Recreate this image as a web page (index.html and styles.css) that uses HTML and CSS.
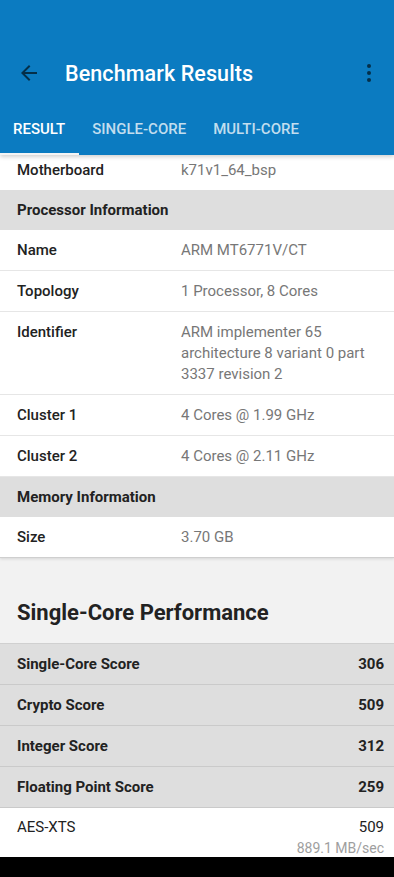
FILE: index.html
```html
<!DOCTYPE html>
<html lang="en">
  <head>
    <meta charset="UTF-8" />
    <meta name="viewport" content="width=device-width, initial-scale=1.0" />
    <title>Benchmark Results</title>
    <link rel="stylesheet" href="styles.css">
  </head>

  <body>
    <header class="appbar">
      <div class="toolbar">
        <svg class="icon back" width="24" height="24" viewBox="0 0 24 24">
          <path d="M20 11H7.83l5.59-5.59L12 4l-8 8 8 8 1.41-1.41L7.83 13H20v-2z" />
        </svg>
        <h1 class="title">Benchmark Results</h1>
        <svg class="icon more" width="24" height="24" viewBox="0 0 24 24">
          <circle cx="12" cy="5" r="2" />
          <circle cx="12" cy="12" r="2" />
          <circle cx="12" cy="19" r="2" />
        </svg>
      </div>
      <nav class="tabs">
        <div class="tab active">Result</div>
        <div class="tab">Single-Core</div>
        <div class="tab">Multi-Core</div>
      </nav>
    </header>

    <main class="content">
      <section class="card">
        <div class="row first">
          <div class="label">Motherboard</div>
          <div class="value">k71v1_64_bsp</div>
        </div>
        <div class="section-head">Processor Information</div>
        <div class="row">
          <div class="label">Name</div>
          <div class="value">ARM MT6771V/CT</div>
        </div>
        <div class="row">
          <div class="label">Topology</div>
          <div class="value">1 Processor, 8 Cores</div>
        </div>
        <div class="row">
          <div class="label">Identifier</div>
          <div class="value">ARM implementer 65 architecture 8 variant 0 part 3337 revision 2</div>
        </div>
        <div class="row">
          <div class="label">Cluster 1</div>
          <div class="value">4 Cores @ 1.99 GHz</div>
        </div>
        <div class="row">
          <div class="label">Cluster 2</div>
          <div class="value">4 Cores @ 2.11 GHz</div>
        </div>
        <div class="section-head">Memory Information</div>
        <div class="row last">
          <div class="label">Size</div>
          <div class="value">3.70 GB</div>
        </div>
      </section>

      <h2 class="perf-title">Single-Core Performance</h2>

      <section class="scores">
        <div class="score-row">
          <span>Single-Core Score</span>
          <span>306</span>
        </div>
        <div class="score-row">
          <span>Crypto Score</span>
          <span>509</span>
        </div>
        <div class="score-row">
          <span>Integer Score</span>
          <span>312</span>
        </div>
        <div class="score-row">
          <span>Floating Point Score</span>
          <span>259</span>
        </div>
        <div class="test-row">
          <div class="test-line">
            <span>AES-XTS</span>
            <span>509</span>
          </div>
          <div class="test-rate">889.1 MB/sec</div>
        </div>
      </section>
    </main>

    <div class="navbar"></div>
  </body>
</html>
```

FILE: styles.css
```css
html,
body {
  margin: 0;
  padding: 0;
}

body {
  width: 394px;
  height: 877px;
  overflow: hidden;
  font-family: Roboto, "Noto Sans", Arial, sans-serif;
  background-color: #f2f2f2;
  color: #212121;
  display: flex;
  flex-direction: column;
}

/* header */
.appbar {
  background-color: #0b7bc1;
  height: 155px;
  box-sizing: border-box;
  padding-top: 48px;
  position: relative;
  z-index: 2;
  box-shadow: 0 2px 4px rgba(0, 0, 0, 0.18);
  flex-shrink: 0;
}

.toolbar {
  height: 50px;
  display: flex;
  align-items: center;
  padding: 0 13px 0 17px;
}

.icon {
  fill: rgba(0, 0, 0, 0.62);
  flex-shrink: 0;
}

.title {
  margin: 0 0 0 24px;
  flex: 1;
  font-size: 21.5px;
  font-weight: 500;
  color: white;
  letter-spacing: 0.1px;
}

.tabs {
  display: flex;
  height: 57px;
}

.tab {
  padding: 6px 14px 0 13px;
  display: flex;
  align-items: center;
  font-size: 15px;
  font-weight: 500;
  text-transform: uppercase;
  color: rgba(255, 255, 255, 0.75);
  box-sizing: border-box;
  border-bottom: 2px solid transparent;
}

.tab.active {
  color: white;
  border-bottom-color: #f4f4f4;
}

/* info list */
.content {
  flex: 1;
  overflow: hidden;
}

.card {
  background-color: white;
  border-bottom: 1px solid #cfcfcf;
  box-shadow: 0 1px 3px rgba(0, 0, 0, 0.12);
}

.row {
  display: flex;
  padding: 10px 10px 9px 17px;
  line-height: 21px;
  font-size: 15px;
  border-bottom: 1px solid #e6e6e6;
}

.row.first {
  padding-top: 5px;
  border-bottom: none;
}

.row.last {
  border-bottom: none;
}

.label {
  width: 164px;
  flex-shrink: 0;
  font-weight: 500;
  color: #222;
}

.value {
  color: #777;
}

.section-head {
  background-color: #dedede;
  height: 40px;
  line-height: 40px;
  padding-left: 17px;
  font-size: 15px;
  font-weight: 700;
  color: #222;
}

/* performance */
.perf-title {
  margin: 0;
  padding: 40px 17px 15px;
  font-size: 22px;
  font-weight: 700;
  line-height: 30px;
  color: #222;
}

.scores {
  border-top: 1px solid #d0d0d0;
}

.score-row {
  display: flex;
  justify-content: space-between;
  background-color: #dedede;
  padding: 10px 10px 9px 17px;
  line-height: 21px;
  font-size: 15px;
  font-weight: 700;
  color: #222;
  border-bottom: 1px solid #cacaca;
}

.test-row {
  background-color: white;
  padding: 9px 10px 4px 17px;
  font-size: 15px;
}

.test-line {
  display: flex;
  justify-content: space-between;
  line-height: 21px;
  color: #222;
}

.test-rate {
  text-align: right;
  font-size: 14px;
  line-height: 20px;
  color: #9e9e9e;
}

.navbar {
  height: 20px;
  background-color: black;
  flex-shrink: 0;
}
```
